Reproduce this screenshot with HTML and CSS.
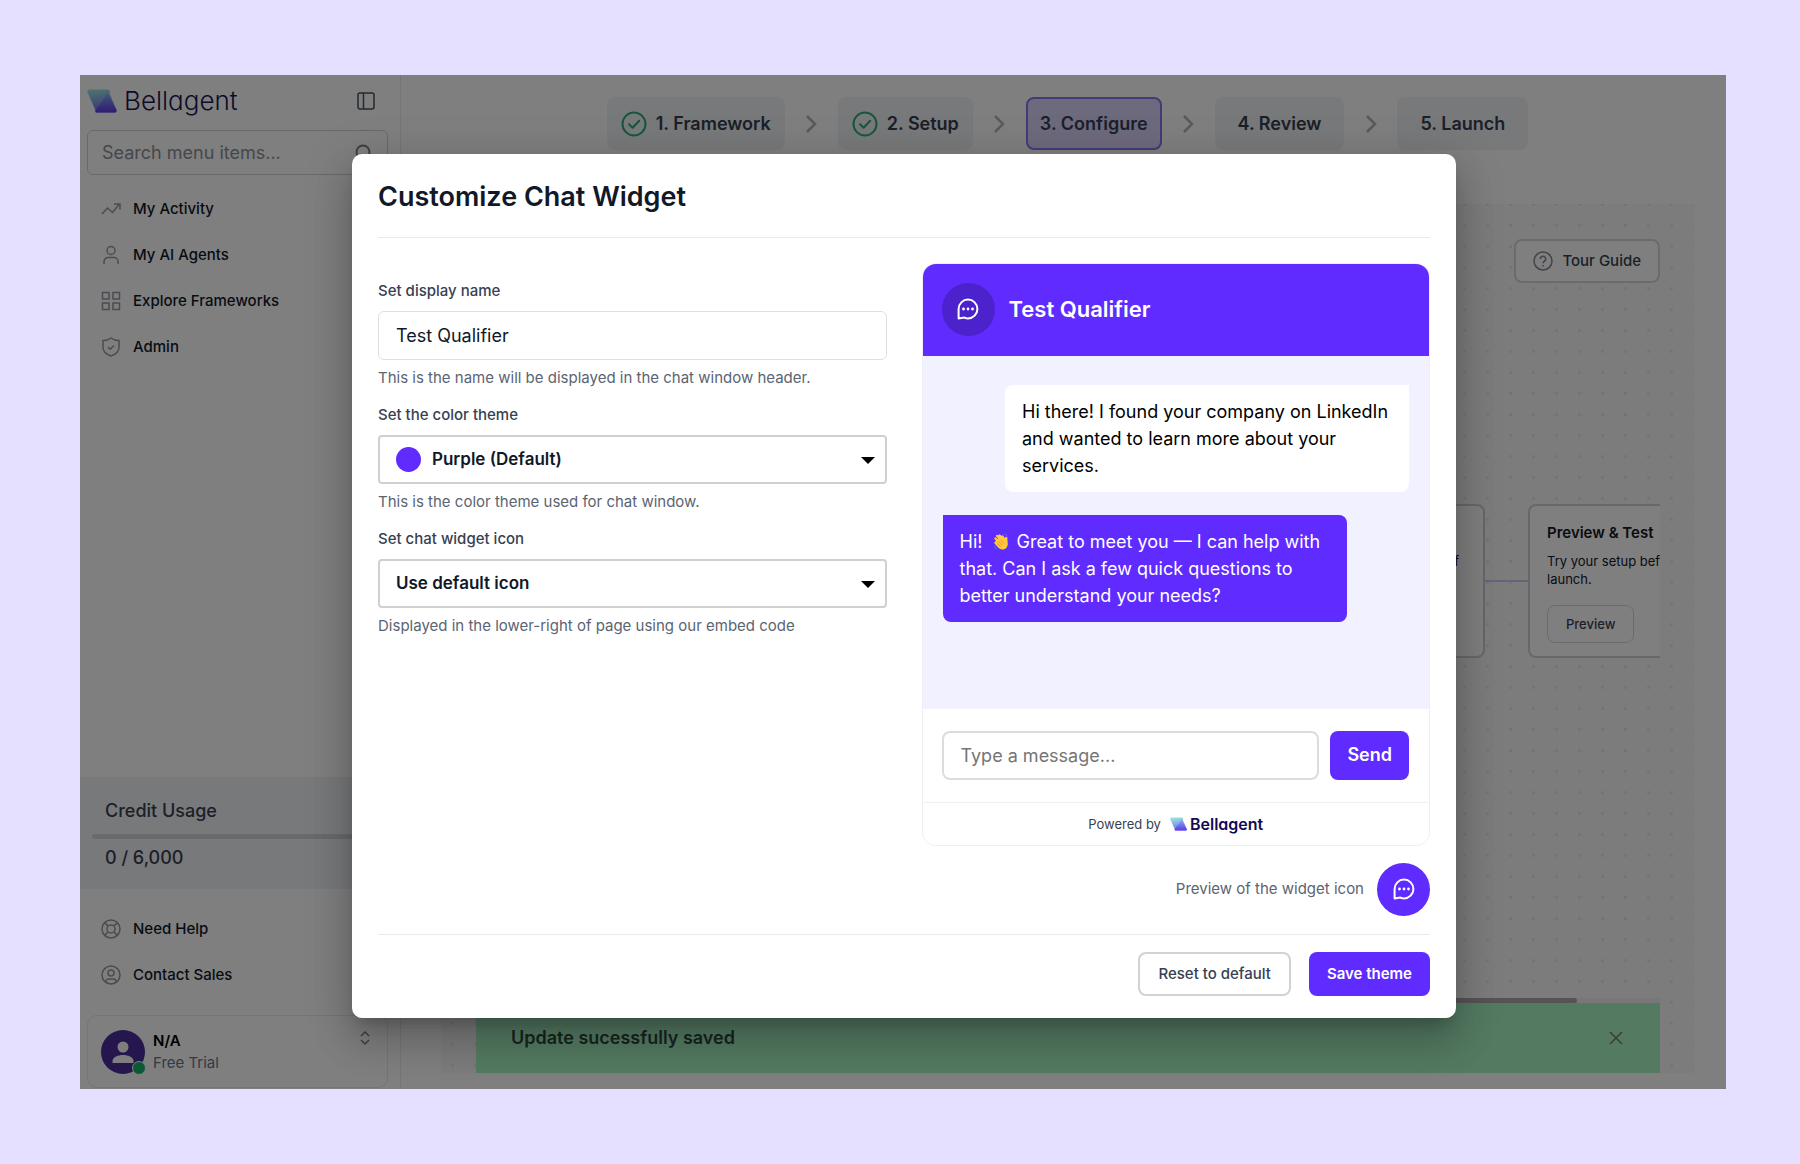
FILE: index.html
```html
<!DOCTYPE html>
<html lang="en">
<head>
<meta charset="utf-8">
<meta name="viewport" content="width=device-width, initial-scale=1">
<title>Bellagent – Customize Chat Widget</title>
<link rel="stylesheet" href="styles.css">
</head>
<body>
<svg class="defs" aria-hidden="true">
  <defs>
    <linearGradient id="mark-a" x1="0.3" y1="0" x2="0.5" y2="1">
      <stop offset="0" stop-color="#9be3e0"/><stop offset="1" stop-color="#6a6cf0"/>
    </linearGradient>
    <linearGradient id="mark-b" x1="0.5" y1="0" x2="0.5" y2="1">
      <stop offset="0" stop-color="#8aa6f0"/><stop offset="1" stop-color="#5a30e8"/>
    </linearGradient>
    <symbol id="mark" viewBox="0 0 30 24">
      <path d="M2 0.5h18.500q1.600 0 2.300 1.500V5L29.500 21q.7 2.500-1.700 2.500H9.500Q8 23.500 8.500 21.500L.4 3Q-.3.700 2 .5z" fill="url(#mark-a)"/>
      <path d="M20.500 4.500 29.300 20.500q.8 3-1.600 3H9.500Q7.800 23.300 8.500 21z" fill="url(#mark-b)" opacity=".85"/>
    </symbol>
    <symbol id="chat" viewBox="0 0 24 24">
      <path d="M2.600 21.400V12A9.400 9.400 0 1 1 12 21.400a9.400 9.400 0 0 1-3.600-.8z" fill="none" stroke="currentColor" stroke-width="2" stroke-linejoin="round"/>
      <circle cx="7.500" cy="12" r="1.400" fill="currentColor"/><circle cx="12" cy="12" r="1.400" fill="currentColor"/><circle cx="16.500" cy="12" r="1.400" fill="currentColor"/>
    </symbol>
    <symbol id="step-done" viewBox="0 0 26 26">
      <circle cx="13" cy="13" r="11.500" fill="none" stroke="currentColor" stroke-width="2"/>
      <path d="m8 13.300 3.600 3.500 6.600-7" fill="none" stroke="currentColor" stroke-width="2" stroke-linecap="round" stroke-linejoin="round"/>
    </symbol>
    <symbol id="chevron" viewBox="0 0 12 20">
      <path d="m2 2 8 8-8 8" fill="none" stroke="currentColor" stroke-width="2.500"/>
    </symbol>
  </defs>
</svg>

<div class="app">
  <aside class="sidebar">
    <div class="brand">
      <svg class="brand-mark" aria-hidden="true"><use href="#mark"/></svg>
      <span class="brand-name">Bellagent</span>
      <button class="icon-button" type="button" aria-label="Collapse menu">
        <svg width="18" height="18" viewBox="0 0 18 18" fill="none" stroke="currentColor" stroke-width="1.500"><rect x="1" y="1" width="16" height="16" rx="2"/><path d="M6.500 1v16"/></svg>
      </button>
    </div>
    <label class="search">
      <input type="search" placeholder="Search menu items..." aria-label="Search menu items">
      <svg width="18" height="18" viewBox="0 0 18 18" fill="none" stroke="currentColor" stroke-width="2" aria-hidden="true"><circle cx="8" cy="8" r="6.500"/><path d="m13 13 4 4"/></svg>
    </label>
    <nav class="nav">
      <a href="#activity"><svg viewBox="0 0 20 20"><path d="m1 15 5.500-6 5 4.500L18 5.500M13 5h6v5.500"/></svg>My Activity</a>
      <a href="#agents"><svg viewBox="0 0 20 20"><circle cx="10" cy="5.500" r="4"/><path d="M3 19v-2.500a4 4 0 0 1 4-4h6a4 4 0 0 1 4 4V19"/></svg>My AI Agents</a>
      <a href="#frameworks"><svg viewBox="0 0 20 20"><rect x="1.500" y="1.500" width="6.500" height="6.500"/><rect x="12" y="1.500" width="6.500" height="6.500"/><rect x="1.500" y="12" width="6.500" height="6.500"/><rect x="12" y="12" width="6.500" height="6.500"/></svg>Explore Frameworks</a>
      <a href="#admin"><svg viewBox="0 0 20 20"><path d="M10 1c2.500 2 5 2.500 8 2.500V10c0 4.500-3.500 7.500-8 9-4.500-1.500-8-4.500-8-9V3.500C5 3.500 7.500 3 10 1zM7 10l2.200 2.200L13 8.500"/></svg>Admin</a>
    </nav>
    <section class="credit">
      <h2>Credit Usage</h2>
      <div class="credit-bar"></div>
      <p>0 / 6,000</p>
    </section>
    <nav class="nav nav-help">
      <a href="#help"><svg viewBox="0 0 20 20"><circle cx="10" cy="10" r="9"/><circle cx="10" cy="10" r="4"/><path d="m3.600 3.600 3.500 3.500m5.800 5.800 3.500 3.500m0-12.800-3.500 3.500m-5.800 5.800-3.500 3.500"/></svg>Need Help</a>
      <a href="#sales"><svg viewBox="0 0 20 20"><circle cx="10" cy="10" r="9"/><circle cx="10" cy="8" r="3"/><path d="M5 17v-.5a2.500 2.500 0 0 1 2.500-2.500h5a2.500 2.500 0 0 1 2.500 2.500v.5"/></svg>Contact Sales</a>
    </nav>
    <button class="account" type="button">
      <span class="avatar">
        <svg width="44" height="44" viewBox="0 0 44 44" aria-hidden="true"><circle cx="22" cy="22" r="22" fill="#4a2f9c"/><circle cx="22" cy="17" r="5.500" fill="#fff"/><path d="M11.500 33v-2c0-4 6-6 10.500-6s10.500 2 10.500 6v2z" fill="#fff"/></svg>
        <span class="status"></span>
      </span>
      <span class="account-text"><strong>N/A</strong><span>Free Trial</span></span>
      <svg class="account-toggle" width="10" height="14" viewBox="0 0 10 14" fill="none" stroke="currentColor" stroke-width="1.500" aria-hidden="true"><path d="m1 5 4-4 4 4M1 9l4 4 4-4"/></svg>
    </button>
  </aside>

  <main class="main">
    <ol class="steps">
      <li class="step"><svg class="tick"><use href="#step-done"/></svg>1. Framework</li>
      <li class="sep" aria-hidden="true"><svg><use href="#chevron"/></svg></li>
      <li class="step"><svg class="tick"><use href="#step-done"/></svg>2. Setup</li>
      <li class="sep" aria-hidden="true"><svg><use href="#chevron"/></svg></li>
      <li class="step step-current" aria-current="step">3. Configure</li>
      <li class="sep" aria-hidden="true"><svg><use href="#chevron"/></svg></li>
      <li class="step step-next">4. Review</li>
      <li class="sep" aria-hidden="true"><svg><use href="#chevron"/></svg></li>
      <li class="step step-next">5. Launch</li>
    </ol>
    <section class="canvas">
      <button class="tour" type="button">
        <svg width="20" height="20" viewBox="0 0 20 20" fill="none" stroke="#808790" stroke-width="1.500" aria-hidden="true"><circle cx="10" cy="10" r="9"/><path d="M7.300 8a2.700 2.700 0 1 1 4 2.300c-.9.500-1.300.9-1.300 1.900M10 14v1.500"/></svg>
        Tour Guide
      </button>
      <div class="flow">
        <article class="card card-prev"><p>Set the look and feel of</p></article>
        <span class="link"></span>
        <article class="card card-last">
          <h3>Preview &amp; Test</h3>
          <p>Try your setup before launch.</p>
          <button type="button">Preview</button>
        </article>
      </div>
      <div class="scroll-track"><div class="scroll-thumb"></div></div>
      <div class="toast" role="status">
        Update sucessfully saved
        <button class="icon-button" type="button" aria-label="Dismiss">
          <svg width="14" height="14" viewBox="0 0 14 14" fill="none" stroke="currentColor" stroke-width="1.500"><path d="m1 1 12 12M13 1 1 13"/></svg>
        </button>
      </div>
    </section>
  </main>

  <div class="overlay">
    <div class="modal" role="dialog" aria-modal="true" aria-labelledby="modal-title">
      <h1 id="modal-title">Customize Chat Widget</h1>
      <div class="modal-body">
        <form class="form">
          <div class="field">
            <label for="display-name">Set display name</label>
            <input id="display-name" type="text" value="Test Qualifier">
            <p>This is the name will be displayed in the chat window header.</p>
          </div>
          <div class="field">
            <label for="theme">Set the color theme</label>
            <div class="select has-swatch">
              <span class="swatch"></span>
              <select id="theme"><option>Purple (Default)</option></select>
              <svg class="caret" viewBox="0 0 14 7" aria-hidden="true"><path d="M0 0h14L7 7z"/></svg>
            </div>
            <p>This is the color theme used for chat window.</p>
          </div>
          <div class="field">
            <label for="icon">Set chat widget icon</label>
            <div class="select">
              <select id="icon"><option>Use default icon</option></select>
              <svg class="caret" viewBox="0 0 14 7" aria-hidden="true"><path d="M0 0h14L7 7z"/></svg>
            </div>
            <p>Displayed in the lower-right of page using our embed code</p>
          </div>
        </form>
        <div class="preview">
          <section class="chat">
            <header class="chat-head">
              <span class="bubble-icon bubble-icon-dark"><svg><use href="#chat"/></svg></span>
              <h2>Test Qualifier</h2>
            </header>
            <div class="chat-body">
              <p class="msg msg-user">Hi there! I found your company on LinkedIn and wanted to learn more about your services.</p>
              <p class="msg msg-agent">Hi! <svg class="wave" viewBox="0 0 16 18" role="img" aria-label="Waving hand">
                <path d="M5 8 2.500 5.500M7 6 4.200 3M9 5 6.500 2.500M11 6 9.500 3.500" stroke="#ffc83d" stroke-width="2.400" stroke-linecap="round"/>
                <path d="M3 7 8 4l3 2 1.500-2q1.500-1 1.800.8l.5 6.200q-.3 4.500-4.300 5.500-3 .5-5.500-2L1.500 10.500q-.8-1.500.8-1.700z" fill="#ffc83d"/>
                <path d="m4 10.500 3.500 3M5.500 8.500 9 12M7.800 7l3 3.500" stroke="#e8912d" stroke-width=".8" stroke-linecap="round"/>
                <path d="M11.500 1q2 .3 2.800 2M1 13q.5 2.300 2.700 3" stroke="#3f7fd0" stroke-width="1" fill="none" stroke-linecap="round"/>
              </svg> Great to meet you — I can help with that. Can I ask a few quick questions to better understand your needs?</p>
            </div>
            <div class="composer">
              <input type="text" placeholder="Type a message..." aria-label="Type a message">
              <button class="primary" type="button">Send</button>
            </div>
            <footer class="powered">Powered by
              <span class="powered-brand"><svg aria-hidden="true"><use href="#mark"/></svg>Bellagent</span>
            </footer>
          </section>
          <div class="widget-icon">
            Preview of the widget icon
            <span class="bubble-icon"><svg><use href="#chat"/></svg></span>
          </div>
        </div>
      </div>
      <div class="actions">
        <button class="secondary" type="button">Reset to default</button>
        <button class="primary" type="button">Save theme</button>
      </div>
    </div>
  </div>
</div>
</body>
</html>
```
FILE: styles.css
```css
:root {
  --purple: #5f2bff;
  --ink: #111827;
  --slate: #374151;
  --muted: #5b6472;
  --line: #e9eaed;
}

* { box-sizing: border-box; }

body {
  margin: 0;
  min-height: 100vh;
  display: flex;
  padding: 75px 74px 75px 80px;
  background: #e5e0ff;
  color: var(--ink);
  font: 15px/24px Inter, "Liberation Sans", sans-serif;
}

h1, h2, h3, p, ol { margin: 0; padding: 0; }
button, input, select { font: inherit; color: inherit; }
button { cursor: pointer; }
input::placeholder { color: #757575; opacity: 1; }
.defs { position: absolute; width: 0; height: 0; }

.app {
  position: relative;
  flex: 1;
  display: grid;
  grid-template-columns: 321px minmax(0, 1fr);
  background: #fff;
  overflow: hidden;
}

.icon-button {
  display: flex;
  padding: 0;
  border: 0;
  background: none;
}

/* Sidebar */
.sidebar {
  display: flex;
  flex-direction: column;
  border-right: 1px solid var(--line);
}

.brand {
  display: flex;
  align-items: center;
  height: 52px;
  padding: 0 25px 0 7px;
}
.brand-mark { width: 30px; height: 24px; }
.brand-name {
  flex: 1;
  margin-left: 7px;
  color: #1c1750;
  font-size: 26px;
  font-weight: 300;
  font-feature-settings: "cv11";
}
.brand .icon-button { color: #4b5563; }

.search {
  display: flex;
  align-items: center;
  height: 45px;
  margin: 3px 12px 0 7px;
  padding: 0 14px;
  border: 1px solid #cfd2d8;
  border-radius: 6px;
  color: #7b818c;
}
.search input {
  flex: 1;
  min-width: 0;
  padding: 0;
  border: 0;
  outline: 0;
  background: none;
  font-size: 18px;
}
.search input::placeholder { color: #8a8f98; }

.nav {
  display: flex;
  flex-direction: column;
  padding: 11px 21px 0;
}
.nav a {
  display: flex;
  align-items: center;
  gap: 12px;
  height: 46px;
  color: var(--ink);
  font-weight: 500;
  text-decoration: none;
}
.nav svg {
  width: 20px;
  height: 20px;
  fill: none;
  stroke: #9298a3;
  stroke-width: 1.5px;
}
.nav-help { padding: 17px 21px; }

.credit {
  margin-top: auto;
  padding: 22px 12px 19px;
  background: #f0f3f7;
  color: var(--slate);
}
.credit h2, .credit p {
  padding: 0 13px;
  font-size: 18px;
  line-height: 24px;
  font-weight: 500;
}
.credit-bar {
  height: 5px;
  margin: 11px 0 7px;
  border-radius: 3px;
  background: #d1d5db;
}

.account {
  display: flex;
  align-items: center;
  gap: 8px;
  height: 73px;
  margin: 0 12px 1px 7px;
  padding: 0 17px 0 13px;
  border: 1px solid var(--line);
  border-radius: 10px;
  background: none;
  text-align: left;
}
.avatar { position: relative; display: flex; }
.status {
  position: absolute;
  right: -1px;
  bottom: -1px;
  width: 14px;
  height: 14px;
  border: 1px solid #fff;
  border-radius: 50%;
  background: #17b26a;
}
.account-text {
  flex: 1;
  display: flex;
  flex-direction: column;
  line-height: 22px;
  color: #64748b;
}
.account-text strong { color: #000; font-weight: 600; }
.account-toggle { align-self: flex-start; margin-top: 15px; color: #7b818c; }

/* Workspace */
.main {
  display: flex;
  flex-direction: column;
  padding: 22px 32px 16px 40px;
}

.steps {
  display: flex;
  justify-content: center;
  list-style: none;
}
.step {
  display: flex;
  align-items: center;
  gap: 9px;
  height: 53px;
  padding: 0 14px;
  border-radius: 8px;
  background: #f0f3f7;
  color: var(--slate);
  font-size: 18px;
  font-weight: 600;
}
.step-current {
  padding: 0 12px;
  border: 2px solid #8f72f0;
  background: #dcd5fb;
}
.step-next { padding: 0 23px; }
.tick { width: 26px; height: 26px; color: #2fae73; }
.sep {
  display: flex;
  align-items: center;
  justify-content: center;
  width: 53px;
  color: #b5b5b5;
}
.sep svg { width: 12px; height: 20px; }

.canvas {
  flex: 1;
  display: flex;
  flex-direction: column;
  margin-top: 54px;
  padding: 35px 34px 0 35px;
  background: radial-gradient(circle, #e6e6e8 0 1px, transparent 2px) right 11px bottom -3px / 23px 21px #f8f8f8;
}

.tour {
  align-self: flex-end;
  display: flex;
  align-items: center;
  gap: 9px;
  height: 44px;
  padding: 0 17px;
  border: 2px solid #d5d7db;
  border-radius: 8px;
  background: #fff;
  color: var(--slate);
  font-weight: 500;
}

.flow {
  flex: 1;
  display: flex;
  align-items: flex-start;
  justify-content: flex-end;
  padding-top: 221px;
  overflow: hidden;
}
.card {
  flex: 0 0 220px;
  height: 154px;
  padding: 15px 17px;
  border: 2px solid #cfd1da;
  border-radius: 8px;
  background: #fff;
  font-size: 13px;
  line-height: 18px;
}
.card-prev { padding: 46px 24px; text-align: right; }
.card-last { margin-right: -88px; }
.card h3 { font-size: 15px; line-height: 24px; font-weight: 600; }
.card h3 + p { width: 150px; margin: 7px 0 17px; }
.card button {
  height: 38px;
  padding: 0 18px;
  border: 1px solid #d5d7db;
  border-radius: 8px;
  background: none;
  color: var(--slate);
  font-weight: 500;
}
.link {
  flex: 0 0 43px;
  height: 2px;
  margin-top: 76px;
  background: #cdc6f5;
}

.scroll-track { background: #f3eef1; }
.scroll-thumb { width: 93%; height: 5px; border-radius: 0 3px 3px 0; background: #aaa6a9; }

.toast {
  display: flex;
  align-items: center;
  justify-content: space-between;
  height: 70px;
  padding: 0 37px 0 35px;
  background: #a9f5c5;
  color: #2f4a3d;
  font-size: 18px;
  font-weight: 600;
}
.toast .icon-button { color: #6e7b74; }

/* Dialog */
.overlay {
  position: absolute;
  inset: 0;
  display: flex;
  align-items: center;
  justify-content: center;
  padding: 7px 0 0 2px;
  background: rgba(0, 0, 0, .5);
}
.modal {
  width: 1104px;
  max-width: 100%;
  padding: 0 26px 22px;
  border-radius: 10px;
  background: #fff;
  box-shadow: 0 11px 15px -7px rgba(0, 0, 0, .2), 0 24px 38px 3px rgba(0, 0, 0, .14), 0 9px 46px 8px rgba(0, 0, 0, .12);
}
.modal h1 {
  padding: 25px 0 22px;
  border-bottom: 1px solid var(--line);
  font-size: 27px;
  line-height: 36px;
  font-weight: 600;
}
.modal-body {
  display: grid;
  grid-template-columns: 1fr 1fr;
  gap: 35px;
  padding: 25px 0 18px;
}

.form { padding-top: 16px; }
.field { height: 124px; }
.field label {
  display: block;
  margin-bottom: 8px;
  color: var(--slate);
  font-weight: 500;
}
.field p { margin-top: 6px; color: var(--muted); }
.field input, .field select {
  display: block;
  width: 100%;
  height: 49px;
  padding: 0 17px;
  border: 1px solid #dcdfe4;
  border-radius: 6px;
  background: #fff;
  font-size: 18px;
  line-height: 24px;
}
.field select {
  appearance: none;
  border: 2px solid #cdd0d5;
  border-radius: 4px;
  padding: 0 16px;
  font-size: 17px;
  font-weight: 600;
}
.select { position: relative; }
.field .has-swatch select { padding-left: 52px; }
.swatch {
  position: absolute;
  left: 18px;
  top: 12px;
  width: 25px;
  height: 25px;
  border-radius: 50%;
  background: var(--purple);
}
.caret { position: absolute; right: 12px; top: 22px; width: 14px; height: 7px; }

.chat {
  overflow: hidden;
  border: 1px solid #eeeef4;
  border-radius: 14px;
}
.chat-head {
  display: flex;
  align-items: center;
  gap: 14px;
  height: 93px;
  margin: -1px -1px 0;
  padding: 0 20px;
  background: var(--purple);
  color: #fff;
}
.chat-head h2 { font-size: 22px; line-height: 30px; font-weight: 600; }
.bubble-icon {
  display: flex;
  align-items: center;
  justify-content: center;
  width: 53px;
  height: 53px;
  border-radius: 50%;
  background: var(--purple);
  color: #fff;
}
.bubble-icon-dark { background: #4c22cc; }
.bubble-icon svg { width: 24px; height: 24px; }

.chat-body {
  display: flex;
  flex-direction: column;
  gap: 23px;
  height: 353px;
  padding: 29px 20px;
  background: #f2f1ff;
}
.msg {
  width: 404px;
  max-width: 90%;
  padding: 13px 17px;
  border-radius: 8px;
  font-size: 18px;
  line-height: 27px;
}
.msg-user { align-self: flex-end; border-top-right-radius: 0; background: #fff; color: #000; }
.msg-agent { border-top-left-radius: 0; background: var(--purple); color: #fff; }
.wave { width: 16px; height: 18px; margin: 0 2px 0 6px; vertical-align: -3px; fill: none; }

.composer {
  display: flex;
  gap: 11px;
  padding: 22px 20px 22px 19px;
  border-bottom: 1px solid #f1f1f5;
}
.composer input {
  flex: 1;
  min-width: 0;
  height: 49px;
  padding: 0 17px;
  border: 2px solid #dcdcde;
  border-radius: 8px;
  font-size: 18px;
}
.composer .primary { height: 49px; font-size: 18px; font-weight: 600; }

.powered {
  display: flex;
  align-items: center;
  justify-content: center;
  gap: 9px;
  height: 42px;
  color: var(--slate);
  font-size: 13px;
}
.powered-brand {
  display: flex;
  align-items: center;
  gap: 3px;
  color: #120a4f;
  font-size: 16px;
  font-weight: 600;
  font-feature-settings: "cv11";
}
.powered-brand svg { width: 17px; height: 14px; }

.widget-icon {
  display: flex;
  align-items: center;
  justify-content: flex-end;
  gap: 13px;
  margin-top: 17px;
  color: var(--muted);
}

.actions {
  display: flex;
  justify-content: flex-end;
  gap: 18px;
  padding-top: 17px;
  border-top: 1px solid var(--line);
}
.primary, .secondary {
  height: 44px;
  padding: 0 18px;
  border: 0;
  border-radius: 8px;
  background: var(--purple);
  color: #fff;
  font-weight: 600;
}
.secondary {
  border: 2px solid #d0d2d6;
  background: #fff;
  color: var(--slate);
  font-weight: 500;
}
.composer .primary { padding: 0 17px; }
```
